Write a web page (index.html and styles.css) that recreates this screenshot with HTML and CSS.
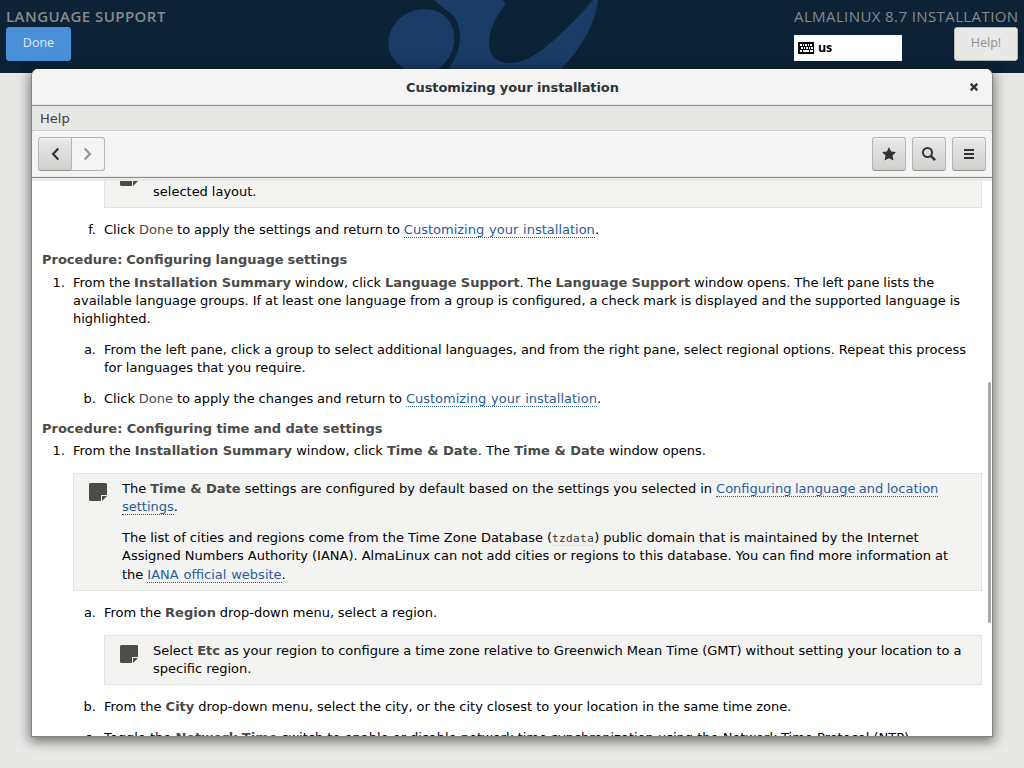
FILE: index.html
```html
<!DOCTYPE html>
<html lang="en">
<head>
<meta charset="utf-8">
<title>Customizing your installation</title>
<link rel="stylesheet" href="styles.css">
</head>
<body>
<header class="banner">
  <svg class="logo" width="220" height="73" viewBox="0 0 220 73">
    <g fill="#193b66">
      <path d="M45 9C61 9 74 20 74.300 37C74.500 51 68 62 58 69L54 73H30L25 69C14 62 8.500 53 8.500 44C8.500 24 25 9 45 9Z"/>
      <path d="M54.500 0H123C126 4 125 5 122 9C114 20 109 31 109 43C109 56 117 63 130 63C144 63 156 55 168 45C184 32 200 15 213 0H218C215 25 200 50 181 69L177 73H65L69 68C75 59 80 50 80 38C80 18 71 13 62 7Q57 3 54.500 0Z"/>
    </g>
  </svg>
  <div class="banner-left">
    <div class="spoke">LANGUAGE SUPPORT</div>
    <button class="done">Done</button>
  </div>
  <div class="banner-right">
    <div class="product">ALMALINUX 8.7 INSTALLATION</div>
    <div class="tools">
      <div class="layout">
        <svg width="16" height="12" viewBox="0 0 16 12" shape-rendering="crispEdges"><rect width="16" height="12" rx="1"/><path fill="#fff" d="M2 2h2v2H2zM5 2h1v2H5zM7 2h2v2H7zM10 2h1v2h-1zM12 2h2v2h-2zM3 5h2v2H3zM6 5h1v2H6zM8 5h2v2H8zM11 5h1v2h-1zM13 5h2v2h-2zM2 8h2v2H2zM5 8h6v2H5zM12 8h3v2h-3z"/></svg>
        <span>us</span>
      </div>
      <button class="help">Help!</button>
    </div>
  </div>
</header>

<div class="window">
  <div class="titlebar">
    <span>Customizing your installation</span>
    <svg class="close" width="8" height="8" viewBox="0 0 8 8"><path d="M.7.7 7.300 7.300M7.300.7.7 7.300" stroke="#2e3436" stroke-width="2.300"/></svg>
  </div>
  <div class="menubar">Help</div>
  <div class="toolbar">
    <div class="nav">
      <button class="btn back"><svg width="16" height="16" viewBox="0 0 16 16"><path d="M11.300 2.600 6.100 8l5.200 5.400" fill="none" stroke="#2e3436" stroke-width="2.200"/></svg></button>
      <button class="btn forward"><svg width="16" height="16" viewBox="0 0 16 16"><path d="M4.700 2.600 9.900 8l-5.200 5.400" fill="none" stroke="#929595" stroke-width="2.200"/></svg></button>
    </div>
    <div class="actions">
      <button class="btn"><svg width="16" height="16" viewBox="0 0 16 16"><path fill="#2e3436" d="M8 1l2.100 4.600 4.900.5-3.500 3.500 1 5L8 12.200 3.500 14.600l1-5L1 6.100l4.900-.5z"/></svg></button>
      <button class="btn"><svg width="16" height="16" viewBox="0 0 16 16"><g fill="none" stroke="#2e3436"><circle cx="6.500" cy="6.500" r="4.500" stroke-width="2"/><path d="M9.800 9.800l4.300 4.300" stroke-width="2.500"/></g></svg></button>
      <button class="btn"><svg width="16" height="16" viewBox="0 0 16 16" shape-rendering="crispEdges"><path fill="#2e3436" d="M3 3h10v2H3zM3 7h10v2H3zM3 11h10v2H3z"/></svg></button>
    </div>
  </div>
  <div class="view">
    <div class="page">
      <div class="step-body nested">
        <div class="note clipped">
          <svg class="note-icon" width="18" height="18" viewBox="0 0 18 18"><path fill="#4a4c47" d="M1 0h16l1 1v11h-6v6H1l-1-1V1zM13 18v-5h5z"/></svg>
          <div><p>&nbsp;<br>selected layout.</p></div>
        </div>
      </div>
      <div class="step sub"><span class="mark">f.</span><p>Click <span class="gui">Done</span> to apply the settings and return to <a class="wide">Customizing your installation</a>.</p></div>

      <h2 class="lead">Procedure: Configuring language settings</h2>
      <div class="step"><span class="mark">1.</span><p><span class="tight">From the <b>Installation Summary</b> window, click <b>Language Support</b>. The <b>Language Support</b> window opens. The left pane lists the</span><br>available language groups. If at least one language from a group is configured, a check mark is displayed and the supported language is<br>highlighted.</p></div>
      <div class="step sub"><span class="mark">a.</span><p>From the left pane, click a group to select additional languages, and from the right pane, select regional options. Repeat this process<br>for languages that you require.</p></div>
      <div class="step sub"><span class="mark">b.</span><p class="snug">Click <span class="gui">Done</span> to apply the changes and return to <a class="wide">Customizing your installation</a>.</p></div>

      <h2 class="roomy">Procedure: Configuring time and date settings</h2>
      <div class="step"><span class="mark">1.</span><p class="even">From the <b>Installation Summary</b> window, click <b>Time &amp; Date</b>. The <b>Time &amp; Date</b> window opens.</p></div>
      <div class="step-body">
        <div class="note">
          <svg class="note-icon" width="18" height="18" viewBox="0 0 18 18"><path fill="#4a4c47" d="M1 0h16l1 1v11h-6v6H1l-1-1V1zM13 18v-5h5z"/></svg>
          <div>
            <p class="loose">The <b>Time &amp; Date</b> settings are configured by default based on the settings you selected in <a class="narrow">Configuring language and location</a><br><a>settings</a>.</p>
            <p class="loose">The list of cities and regions come from the Time Zone Database (<code>tzdata</code>) public domain that is maintained by the Internet<br>Assigned Numbers Authority (IANA). AlmaLinux can not add cities or regions to this database. You can find more information at<br>the <a class="wide">IANA official website</a>.</p>
          </div>
        </div>
      </div>
      <div class="step sub"><span class="mark">a.</span><p class="tight">From the <b>Region</b> drop-down menu, select a region.</p></div>
      <div class="step-body nested">
        <div class="note">
          <svg class="note-icon" width="18" height="18" viewBox="0 0 18 18"><path fill="#4a4c47" d="M1 0h16l1 1v11h-6v6H1l-1-1V1zM13 18v-5h5z"/></svg>
          <div><p class="loose">Select <b>Etc</b> as your region to configure a time zone relative to Greenwich Mean Time (GMT) without setting your location to a<br>specific region.</p></div>
        </div>
      </div>
      <div class="step sub"><span class="mark">b.</span><p class="loose">From the <b>City</b> drop-down menu, select the city, or the city closest to your location in the same time zone.</p></div>
      <div class="step sub"><span class="mark">c.</span><p class="even">Toggle the <b>Network Time</b> switch to enable or disable network time synchronization using the Network Time Protocol (NTP).</p></div>
    </div>
    <div class="scrollbar"></div>
  </div>
</div>
</body>
</html>
```
FILE: styles.css
```css
* { box-sizing: border-box; }
body {
  margin: 0;
  height: 768px;
  overflow: hidden;
  background: #e8e8e7;
  font: 13px/18.2px "DejaVu Sans", sans-serif;
  color: #000;
}
button { font: inherit; padding: 0; margin: 0; }
svg { display: block; flex: none; }

.banner {
  position: relative;
  display: flex;
  justify-content: space-between;
  height: 73px;
  padding: 6px 6px 0;
  background: #0c2337;
  font-family: "Open Sans", "Noto Sans", sans-serif;
}
.logo { position: absolute; left: 380px; top: 0; }
.banner-left, .banner-right { position: relative; }
.spoke, .product { height: 21px; line-height: 21px; color: #888b8b; white-space: nowrap; }
.spoke { font-size: 15px; font-weight: 600; letter-spacing: .45px; }
.product { font-size: 15px; letter-spacing: .4px; }
.done, .help { border-radius: 3px; height: 34px; padding-bottom: 1px; font-size: 12.5px; }
.done { width: 65px; border: 1px solid #4a90d9; background: #4a90d9; color: #dbe9f7; }
.help { width: 64px; border: 1px solid #b6b6b3; background: #e8e8e7; color: #929595; }
.banner-right { width: 224px; }
.tools { display: flex; justify-content: space-between; }
.layout {
  display: flex;
  align-items: center;
  gap: 4px;
  width: 108px;
  height: 26px;
  margin-top: 8px;
  padding: 0 4px;
  background: #fff;
  font-size: 12.5px;
  font-weight: 700;
  letter-spacing: -.3px;
}

.window {
  position: absolute;
  left: 31px;
  top: 69px;
  width: 962px;
  height: 668px;
  display: flex;
  flex-direction: column;
  border: solid #858582;
  border-width: 0 1px 1px;
  border-radius: 7px 7px 0 0;
  background: #e8e8e7;
  overflow: hidden;
  box-shadow: 0 3px 12px 1px rgba(0, 0, 0, .5), 0 3px 22px rgba(0, 0, 0, .08);
}
.titlebar {
  position: relative;
  display: flex;
  align-items: center;
  justify-content: center;
  height: 37px;
  padding-top: 2px;
  padding-left: 1px;
  border-bottom: 1px solid #8f8f8a;
  background: #f4f4f4;
  box-shadow: inset 0 1px #fff, inset 0 -1px #e4e4e2;
  color: #2e3436;
  font-weight: 700;
  letter-spacing: -.09px;
}
.close { position: absolute; right: 14px; top: 14px; }
.menubar { height: 25px; padding: 4px 8px 0; border-bottom: 1px solid #d0d0ce; color: #3b4042; }
.toolbar {
  display: flex;
  justify-content: space-between;
  height: 47px;
  padding: 6px 6px 0;
  border-bottom: 1px solid #8f8f8a;
  border-radius: 5px 5px 0 0;
  background: #f4f4f4;
  box-shadow: inset 0 1px #fff, inset 0 -1px #e4e4e2;
}
.nav, .actions { display: flex; }
.actions { gap: 6px; }
.btn {
  display: flex;
  align-items: center;
  justify-content: center;
  width: 34px;
  height: 34px;
  border: 1px solid #b6b6b3;
  border-bottom-color: #91918c;
  border-radius: 3px;
  background: linear-gradient(#e9e9e8, #d0d0ce);
  box-shadow: inset 0 1px rgba(255, 255, 255, .6);
}
.back { border-radius: 3px 0 0 3px; }
.forward { width: 33px; border-left: 0; border-bottom-color: #b6b6b3; border-radius: 0 3px 3px 0; background: #f4f4f4; box-shadow: none; }

.view { position: relative; flex: 1; margin-top: 3px; overflow: hidden; background: #fff; }
.page { padding: 0 10px; white-space: nowrap; }
.scrollbar { position: absolute; right: 1px; top: 201px; width: 3px; height: 241px; border-radius: 2px; background: #a6a9a9; }
p { margin: 0; word-spacing: -.2px; }
p + p { margin-top: 13.2px; }
.even { word-spacing: 0; }
.loose { word-spacing: -.11px; }
.snug { word-spacing: -.28px; }
.tight { word-spacing: -.35px; }
.wide { word-spacing: .7px; }
.narrow { word-spacing: -.7px; }
b, .gui, h2 { color: #4a4a48; }
h2 { margin: 11.4px 0 3.4px; font-size: 13px; line-height: 18.2px; word-spacing: -.6px; }
.lead { margin: 12.1px 0 4.4px; }
.roomy { word-spacing: -.2px; }
.step { display: flex; margin-bottom: 12.9px; }
.step:has(+ h2) { margin-bottom: 0; }
.mark { flex: none; width: 31px; padding-right: 8px; text-align: right; }
.sub { padding-left: 31px; }
.step-body { margin: 0 0 12.9px 31px; }
.nested { margin-left: 62px; }
.note { display: flex; padding: 6px 15px 5.8px; border: 1px solid #e3e4e2; background: #f3f3f2; }
.note-icon { margin: 3px 15px 0 0; }
.clipped { margin-top: -23.4px; }
a { color: #2a5a9c; border-bottom: 1px dotted #2a5a9c; }
code { font: 11px/1 "DejaVu Sans Mono", monospace; letter-spacing: .4px; color: #2e3436; border-bottom: 1px solid #e3e4e2; }
```
